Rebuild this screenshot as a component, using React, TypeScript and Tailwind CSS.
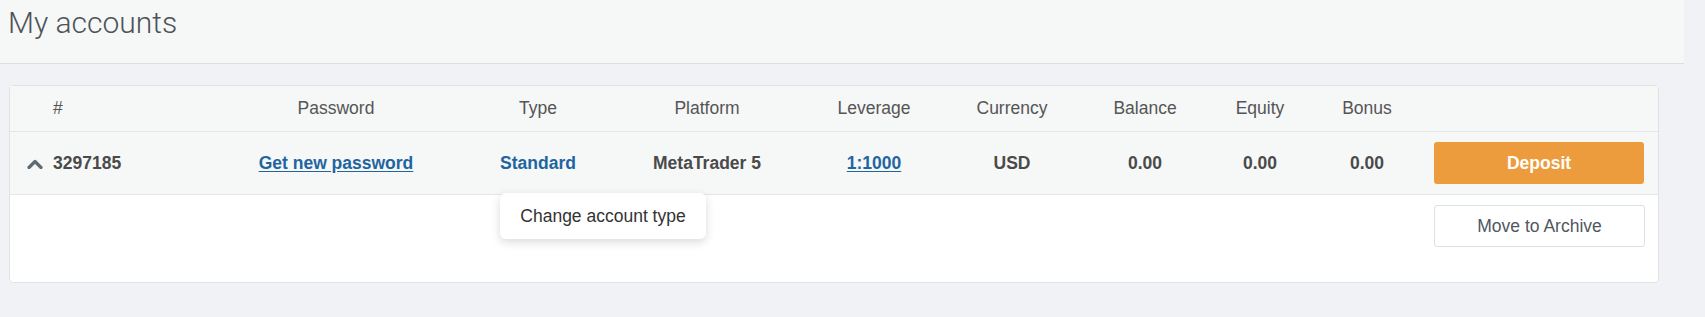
import React from "react";

const columns = ["#", "Password", "Type", "Platform", "Leverage", "Currency", "Balance", "Equity", "Bonus", ""];

function Chevron() {
  return (
    <svg width="16" height="10" viewBox="0 0 16 10" className="shrink-0">
      <polyline points="2,8.5 8,2.5 14,8.5" fill="none" stroke="#5f6b73" strokeWidth="3.2" strokeLinecap="round" strokeLinejoin="round" />
    </svg>
  );
}

export default function App() {
  const grid = "grid grid-cols-[192px_268px_136px_202px_132px_144px_122px_108px_106px_1fr]";

  return (
    <div className="min-h-[317px] bg-[#f1f2f5] font-['Liberation_Sans',Arial,sans-serif] text-[17.5px]">
      {/* Page header */}
      <div className="w-[1684px] h-[64px] bg-[#f6f7f7] border-b border-[#dcdfe1] pl-[8px] pt-[8px]">
        <h1 className="font-['Roboto',sans-serif] font-light text-[30px] leading-[30px] text-[#4e5357]">My accounts</h1>
      </div>

      {/* Accounts card */}
      <div className="pl-[9px] pt-[21px]">
        <div className="relative w-[1650px] bg-white border border-[#dfe3e6] rounded-sm">
          {/* Column titles */}
          <div className={`${grid} h-[46px] items-center bg-[#f6f7f7] border-b border-[#e4e7e9] text-[#555]`}>
            {columns.map((c, i) => (
              <div key={i} className={i === 0 ? "pl-[43px]" : "text-center"}>
                {c}
              </div>
            ))}
          </div>

          {/* Account row */}
          <div className={`${grid} h-[63px] items-center bg-[#f6f7f7] border-b border-[#e4e7e9] font-bold text-[#4a4a4a]`}>
            <div className="flex items-center gap-[10px] pl-[17px] pt-[1px]">
              <Chevron />
              <span>3297185</span>
            </div>
            <div className="text-center">
              <a className="text-[#1f65a0] underline underline-offset-2">Get new password</a>
            </div>
            <div className="text-center text-[#1f65a0]">Standard</div>
            <div className="text-center">MetaTrader 5</div>
            <div className="text-center">
              <a className="text-[#1f65a0] underline underline-offset-2">1:1000</a>
            </div>
            <div className="text-center">USD</div>
            <div className="text-center">0.00</div>
            <div className="text-center">0.00</div>
            <div className="text-center">0.00</div>
            <div className="px-[14px]">
              <button className="w-[210px] h-[42px] rounded-[3px] bg-[#ed9c3d] text-white font-bold">Deposit</button>
            </div>
          </div>

          {/* Expanded actions */}
          <div className="flex justify-end pr-[13px] pt-[10px] pb-[35px]">
            <button className="w-[211px] h-[42px] rounded-[3px] border border-[#dae0e5] bg-white text-[#50585f]">
              Move to Archive
            </button>
          </div>

          {/* Tooltip over the type link */}
          <div className="absolute left-[490px] top-[107px] w-[206px] h-[46px] flex items-center justify-center rounded-md bg-white shadow-[0_3px_10px_rgba(0,0,0,0.15)] text-[#333]">
            Change account type
          </div>
        </div>
      </div>
    </div>
  );
}
